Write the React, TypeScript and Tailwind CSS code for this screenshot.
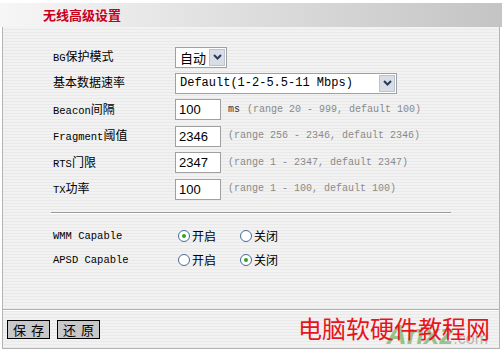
const cjk = "font-['Liberation_Mono','Noto_Sans_CJK_SC',monospace]";

const fields = [
  { en: "BG", zh: "保护模式", h: "h-[26px]", kind: "select-sm", value: "自动" },
  { en: "", zh: "基本数据速率", h: "h-[26px]", kind: "select-lg", value: "Default(1-2-5.5-11 Mbps)" },
  { en: "Beacon", zh: "间隔", h: "h-[27px]", kind: "input", value: "100", unit: "ms", hint: "(range 20 - 999, default 100)" },
  { en: "Fragment", zh: "阈值", h: "h-[26px]", kind: "input", value: "2346", hint: "(range 256 - 2346, default 2346)" },
  { en: "RTS", zh: "门限", h: "h-[27px]", kind: "input", value: "2347", hint: "(range 1 - 2347, default 2347)" },
  { en: "TX", zh: "功率", h: "h-[26px]", kind: "input", value: "100", hint: "(range 1 - 100, default 100)" },
];

const radios = [
  { label: "WMM Capable", on: true },
  { label: "APSD Capable", on: false },
];

function Arrow() {
  return (
    <div className="flex h-[17px] w-[16px] items-center justify-center border border-[#b8c4d4] bg-[#d8dde6]">
      <svg width="9" height="6" viewBox="0 0 9 6">
        <path d="M1 1 L4.5 4.5 L8 1" stroke="#2d3a58" strokeWidth="2" fill="none" />
      </svg>
    </div>
  );
}

function Radio({ checked, text }: { checked: boolean; text: string }) {
  return (
    <div className="flex items-center gap-[2px]">
      <div className="flex h-[12px] w-[12px] items-center justify-center rounded-full border border-[#4a6a96] bg-white">
        {checked && <div className="h-[4px] w-[4px] rounded-full bg-[#2aa52a]" />}
      </div>
      <span className="font-['Noto_Sans_CJK_SC',sans-serif] text-[12px] leading-none text-black">{text}</span>
    </div>
  );
}

export default function App() {
  return (
    <div className="relative h-[352px] w-[502px] overflow-hidden bg-white pt-[3px]">
      <div className="flex h-[24px] items-center bg-[linear-gradient(90deg,#f6f6f6_0%,#e2e2e2_40%,#c4c4c4_100%)] pl-[43px]">
        <span className="font-['Noto_Sans_CJK_SC',sans-serif] text-[13px] font-bold text-[#c8001a]">
          无线高级设置
        </span>
      </div>

      <div className="mx-[2px] flex h-[322px] flex-col border-x border-b border-[#b4b4b4] bg-[repeating-linear-gradient(180deg,#f2f2f2_0px,#f2f2f2_2px,#e9e9e9_2px,#e9e9e9_3px)]">
        <div className="flex flex-col pt-[17px]">
          {fields.map((f) => (
            <div key={f.zh} className={`flex items-center ${f.h}`}>
              <div className={`w-[172px] pl-[50px] text-[12px] leading-none text-black ${cjk}`}>
                {f.en && <span className="text-[10.5px]">{f.en}</span>}
                <span className="font-['Noto_Sans_CJK_SC',sans-serif]">{f.zh}</span>
              </div>
              {f.kind === "select-sm" && (
                <div className="flex h-[21px] w-[52px] items-center justify-between border border-[#a0a0a0] bg-white pl-[4px] pr-[1px]">
                  <span className="font-['Noto_Sans_CJK_SC',sans-serif] text-[13px] leading-none">{f.value}</span>
                  <Arrow />
                </div>
              )}
              {f.kind === "select-lg" && (
                <div className="flex h-[21px] w-[222px] items-center justify-between border border-[#a0a0a0] bg-white pl-[4px] pr-[1px]">
                  <span className="font-['Liberation_Mono',monospace] text-[12px] leading-none">{f.value}</span>
                  <Arrow />
                </div>
              )}
              {f.kind === "input" && (
                <>
                  <div className="flex h-[21px] w-[46px] items-center border border-[#a0a0a0] bg-white pl-[3px]">
                    <span className="font-['Liberation_Sans',sans-serif] text-[13px] leading-none">{f.value}</span>
                  </div>
                  <div className="ml-[7px] flex items-center gap-[7px] font-['Liberation_Mono',monospace] text-[10px] leading-none">
                    {f.unit && <span className="text-[#333]">{f.unit}</span>}
                    <span className="text-[#8a8a8a]">{f.hint}</span>
                  </div>
                </>
              )}
            </div>
          ))}
        </div>

        <div className="ml-[48px] mt-[10px] w-[400px] border-t border-b border-t-[#9a9a9a] border-b-white" />

        <div className="flex flex-col pt-[10px]">
          {radios.map((r) => (
            <div key={r.label} className="flex h-[24px] items-center">
              <div className="w-[175px] pl-[50px] font-['Liberation_Mono',monospace] text-[10.5px] leading-none text-black">
                {r.label}
              </div>
              <div className="w-[62px]">
                <Radio checked={r.on} text="开启" />
              </div>
              <Radio checked={!r.on} text="关闭" />
            </div>
          ))}
        </div>

        <div className="mt-[37px] border-t border-b border-t-[#b0b0b0] border-b-white" />

        <div className="flex gap-[7px] pl-[4px] pt-[9px]">
          {["保存", "还原"].map((b) => (
            <div
              key={b}
              className="flex h-[19px] w-[43px] items-center justify-center border border-black bg-[#c8c8c8] font-['Noto_Sans_CJK_SC',sans-serif] text-[13px] leading-none tracking-[5px] text-black"
            >
              <span className="ml-[5px]">{b}</span>
            </div>
          ))}
        </div>
      </div>

      <div className="absolute bottom-[3px] right-[14px] flex items-end font-['Liberation_Sans',sans-serif] leading-none">
        <span className="text-[28px] font-bold italic text-[#5aa84a] opacity-60">Anxz</span>
        <span className="mb-[2px] text-[16px] text-[#a0a0a0] opacity-70">.com</span>
      </div>
      <div className="absolute bottom-[12px] right-[12px] font-['Noto_Sans_CJK_SC',sans-serif] text-[24px] leading-none text-[#e8141c]">
        电脑软硬件教程网
      </div>
    </div>
  );
}
